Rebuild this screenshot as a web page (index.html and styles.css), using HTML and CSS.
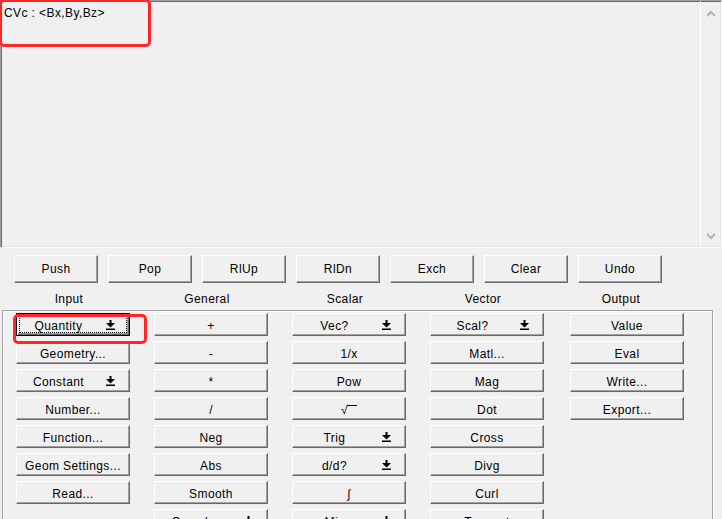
FILE: index.html
```html
<!DOCTYPE html>
<html lang="en">
<head>
    <meta charset="UTF-8">
    <meta name="viewport" content="width=device-width, initial-scale=1.0">
    <title>Field Calculator</title>
    <link rel="stylesheet" href="styles.css">
</head>
<body>
    <div class="display">
        <div class="display-text">CVc : &lt;Bx,By,Bz&gt;</div>
        <div class="scrollbar">
            <svg width="10" height="7" viewBox="0 0 10 7"><path d="M1 6 L5 2 L9 6" fill="none" stroke="#b4b4b4" stroke-width="2"/></svg>
            <svg width="10" height="7" viewBox="0 0 10 7"><path d="M1 1 L5 5 L9 1" fill="none" stroke="#b4b4b4" stroke-width="2"/></svg>
        </div>
        <div class="mark mark-top"></div>
    </div>

    <div class="stack-row">
        <button class="btn stack-btn">Push</button>
        <button class="btn stack-btn">Pop</button>
        <button class="btn stack-btn">RlUp</button>
        <button class="btn stack-btn">RlDn</button>
        <button class="btn stack-btn">Exch</button>
        <button class="btn stack-btn">Clear</button>
        <button class="btn stack-btn">Undo</button>
    </div>

    <div class="group-labels">
        <span>Input</span>
        <span>General</span>
        <span>Scalar</span>
        <span>Vector</span>
        <span>Output</span>
    </div>

    <div class="panel">
        <div class="col">
            <button class="btn drop focused"><span class="txt">Quantity</span><svg class="arrow" width="9" height="10" viewBox="0 0 9 10"><path d="M3.5 0h2v3h3.5l-4.5 4.5l-4.5-4.5h3.5z M0 8.5h9v1.5h-9z"/></svg></button>
            <button class="btn">Geometry...</button>
            <button class="btn drop"><span class="txt">Constant</span><svg class="arrow" width="9" height="10" viewBox="0 0 9 10"><path d="M3.5 0h2v3h3.5l-4.5 4.5l-4.5-4.5h3.5z M0 8.5h9v1.5h-9z"/></svg></button>
            <button class="btn">Number...</button>
            <button class="btn">Function...</button>
            <button class="btn">Geom Settings...</button>
            <button class="btn">Read...</button>
        </div>
        <div class="col">
            <button class="btn">+</button>
            <button class="btn">-</button>
            <button class="btn">*</button>
            <button class="btn">/</button>
            <button class="btn">Neg</button>
            <button class="btn">Abs</button>
            <button class="btn">Smooth</button>
            <button class="btn drop"><span class="txt">Complex</span><svg class="arrow" width="9" height="10" viewBox="0 0 9 10"><path d="M3.5 0h2v3h3.5l-4.5 4.5l-4.5-4.5h3.5z M0 8.5h9v1.5h-9z"/></svg></button>
        </div>
        <div class="col">
            <button class="btn drop"><span class="txt">Vec?</span><svg class="arrow" width="9" height="10" viewBox="0 0 9 10"><path d="M3.5 0h2v3h3.5l-4.5 4.5l-4.5-4.5h3.5z M0 8.5h9v1.5h-9z"/></svg></button>
            <button class="btn">1/x</button>
            <button class="btn">Pow</button>
            <button class="btn"><span class="root">&radic;<span class="root-bar"></span></span></button>
            <button class="btn drop"><span class="txt">Trig</span><svg class="arrow" width="9" height="10" viewBox="0 0 9 10"><path d="M3.5 0h2v3h3.5l-4.5 4.5l-4.5-4.5h3.5z M0 8.5h9v1.5h-9z"/></svg></button>
            <button class="btn drop"><span class="txt">d/d?</span><svg class="arrow" width="9" height="10" viewBox="0 0 9 10"><path d="M3.5 0h2v3h3.5l-4.5 4.5l-4.5-4.5h3.5z M0 8.5h9v1.5h-9z"/></svg></button>
            <button class="btn">&int;</button>
            <button class="btn drop"><span class="txt">Mix</span><svg class="arrow" width="9" height="10" viewBox="0 0 9 10"><path d="M3.5 0h2v3h3.5l-4.5 4.5l-4.5-4.5h3.5z M0 8.5h9v1.5h-9z"/></svg></button>
        </div>
        <div class="col">
            <button class="btn drop"><span class="txt">Scal?</span><svg class="arrow" width="9" height="10" viewBox="0 0 9 10"><path d="M3.5 0h2v3h3.5l-4.5 4.5l-4.5-4.5h3.5z M0 8.5h9v1.5h-9z"/></svg></button>
            <button class="btn">Matl...</button>
            <button class="btn">Mag</button>
            <button class="btn">Dot</button>
            <button class="btn">Cross</button>
            <button class="btn">Divg</button>
            <button class="btn">Curl</button>
            <button class="btn">Tangent</button>
        </div>
        <div class="col col-output">
            <button class="btn">Value</button>
            <button class="btn">Eval</button>
            <button class="btn">Write...</button>
            <button class="btn">Export...</button>
        </div>
        <div class="mark mark-qty"></div>
    </div>
</body>
</html>
```

FILE: styles.css
```css
body {
    margin: 0;
    width: 722px;
    height: 519px;
    overflow: hidden;
    background: #f0f0f0;
    font-family: 'Liberation Sans', Arial, sans-serif;
    font-size: 12px;
    letter-spacing: 0.4px;
    color: #000;
}

/* sunken read-only output box */
.display {
    position: relative;
    height: 248px;
    box-sizing: border-box;
    display: flex;
    border: 1px solid;
    border-color: #a0a0a0 #fff #fff #a0a0a0;
    box-shadow: inset 1px 1px #696969, inset -1px -1px #e3e3e3;
}

.display-text {
    flex: 1;
    padding: 5px 0 0 3px;
    line-height: 14px;
}

.scrollbar {
    width: 20px;
    border-left: 1px solid #fff;
    display: flex;
    flex-direction: column;
    justify-content: space-between;
    align-items: center;
    padding: 9px 0 7px;
}

.scrollbar svg {
    display: block;
}

/* red callout boxes */
.mark {
    position: absolute;
    border: 3px solid #ff2626;
    border-radius: 5px;
    box-sizing: border-box;
    pointer-events: none;
}

.mark-top {
    left: -2px;
    top: -2px;
    width: 152px;
    height: 48px;
}

.mark-qty {
    left: 10px;
    top: 3px;
    width: 134px;
    height: 30px;
}

/* classic 3d push button */
.btn {
    font: inherit;
    letter-spacing: inherit;
    color: #000;
    background: #f0f0f0;
    margin: 0;
    padding: 0;
    border: 1px solid;
    border-color: #fff #696969 #696969 #fff;
    box-shadow: inset -1px -1px #a0a0a0;
    box-sizing: border-box;
    cursor: pointer;
}

.stack-row {
    display: flex;
    gap: 10px;
    padding: 7px 0 0 14px;
}

.stack-btn {
    width: 84px;
    height: 28px;
}

.group-labels {
    display: grid;
    grid-template-columns: repeat(5, 138px);
    margin-top: 9px;
    height: 18px;
    line-height: 14px;
    text-align: center;
}

.panel {
    position: relative;
    margin-left: 2px;
    width: 711px;
    height: 260px;
    box-sizing: border-box;
    border: 1px solid #a0a0a0;
    box-shadow: inset 1px 1px #fff, 1px 1px #fff;
    display: grid;
    grid-template-columns: repeat(5, 138px);
    align-items: start;
    padding: 2px 0 0 13px;
}

.col {
    display: flex;
    flex-direction: column;
    gap: 5px;
}

.col-output {
    padding-left: 2px;
}

.col .btn {
    width: 114px;
    height: 23px;
    line-height: 14px;
    padding-top: 2px;
}

.drop {
    display: flex;
    align-items: center;
}

.drop .txt {
    flex: 1;
    text-align: center;
}

.drop .arrow {
    display: block;
    margin: -2px 14px 0 6px;
}

.focused {
    border-color: #000;
    box-shadow: inset 1px 1px #fff, inset -1px -1px #696969, inset -2px -2px #a0a0a0;
    outline: 1px dotted #000;
    outline-offset: -4px;
}

.root {
    display: inline-flex;
    align-items: flex-start;
}

.root-bar {
    display: inline-block;
    width: 10px;
    margin-top: 2px;
    margin-left: -1px;
    border-top: 1px solid #000;
}
```
